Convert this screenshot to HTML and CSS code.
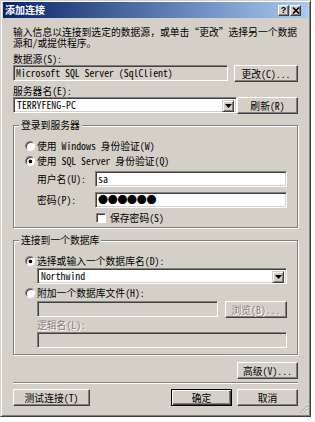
FILE: index.html
```html
<!DOCTYPE html>
<html lang="zh-CN">
<head>
  <meta charset="UTF-8" />
  <title>添加连接</title>
  <link rel="stylesheet" href="styles.css">
</head>
<body>
  <div class="dialog">
    <div class="titlebar">
      <span class="title">添加连接</span>
      <div class="caption-btns">
        <span class="cap-btn">?</span>
        <span class="cap-btn">
          <svg viewBox="0 0 8 7" width="8" height="7">
            <path d="M1 0.5l6 6M7 0.5l-6 6" stroke="#000" stroke-width="1.6" fill="none"/>
          </svg>
        </span>
      </div>
    </div>

    <div class="content">
      <p class="intro">输入信息以连接到选定的数据源，或单击“更改”选择另一个数据<br>源和/或提供程序。</p>

      <div class="label first">数据源(S):</div>
      <div class="row">
        <input class="field readonly" value="Microsoft SQL Server (SqlClient)" readonly>
        <button class="btn btn-change">更改(C)...</button>
      </div>

      <div class="label">服务器名(E):</div>
      <div class="row">
        <div class="combo">
          <span class="combo-text">TERRYFENG-PC</span>
          <span class="combo-arrow"><svg viewBox="0 0 7 4" width="7" height="4"><path d="M0 0h7L3.5 4z" fill="#000"/></svg></span>
        </div>
        <button class="btn btn-side">刷新(R)</button>
      </div>

      <div class="group group-login">
        <span class="group-title">登录到服务器</span>
        <label class="radio-row first">
          <input type="radio" name="auth" class="radio">使用 Windows 身份验证(W)
        </label>
        <label class="radio-row">
          <input type="radio" name="auth" class="radio" checked>使用 SQL Server 身份验证(Q)
        </label>
        <div class="field-row user">
          <span class="field-label">用户名(U):</span>
          <input class="field" value="sa">
        </div>
        <div class="field-row pwd">
          <span class="field-label">密码(P):</span>
          <div class="field dots">●●●●●●</div>
        </div>
        <label class="check-row">
          <input type="checkbox" class="check">保存密码(S)
        </label>
      </div>

      <div class="group group-db">
        <span class="group-title">连接到一个数据库</span>
        <label class="radio-row first">
          <input type="radio" name="db" class="radio" checked>选择或输入一个数据库名(D):
        </label>
        <div class="indent">
          <div class="combo">
            <span class="combo-text">Northwind</span>
            <span class="combo-arrow"><svg viewBox="0 0 7 4" width="7" height="4"><path d="M0 0h7L3.5 4z" fill="#000"/></svg></span>
          </div>
        </div>
        <label class="radio-row attach">
          <input type="radio" name="db" class="radio">附加一个数据库文件(H):
        </label>
        <div class="indent file-row">
          <div class="field disabled"></div>
          <button class="btn btn-browse" disabled>浏览(B)...</button>
        </div>
        <div class="indent sub-label disabled-text">逻辑名(L):</div>
        <div class="indent logic-row">
          <div class="field disabled"></div>
        </div>
      </div>

      <div class="adv-row">
        <button class="btn btn-side">高级(V)...</button>
      </div>

      <div class="separator"></div>

      <div class="footer">
        <button class="btn btn-test">测试连接(T)</button>
        <button class="btn btn-side btn-default">确定</button>
        <button class="btn btn-side">取消</button>
      </div>
    </div>

    <svg class="grip" viewBox="0 0 8 8" width="8" height="8">
      <path d="M7.5 1L1 7.5M7.5 4L4 7.5" stroke="#808080" stroke-width="1" fill="none"/>
      <path d="M7.5 2L2 7.5M7.5 5L5 7.5" stroke="#fff" stroke-width="1" fill="none"/>
    </svg>
  </div>
</body>
</html>
```

FILE: styles.css
```css
* {
  margin: 0;
  padding: 0;
  box-sizing: border-box;
}
body {
  background: #fff;
  font-family: "Noto Sans Mono CJK SC", "Noto Sans CJK SC", "DejaVu Sans Mono", monospace;
  font-size: 9.8px;
  line-height: 10px;
  color: #000;
}
.dialog {
  position: relative;
  width: 311px;
  height: 417px;
  background: #d4d0c8;
  border: 1px solid;
  border-color: #d4d0c8 #404040 #404040 #d4d0c8;
  box-shadow: inset 1px 1px 0 #fff, inset -1px -1px 0 #808080;
  padding: 1px 2px 2px;
}

/* title bar */
.titlebar {
  height: 16px;
  display: flex;
  align-items: center;
  justify-content: space-between;
  padding: 0 7px 0 2px;
  background: linear-gradient(to right, #0a246a, #a6caf0);
}
.title {
  color: #fff;
  font-weight: bold;
  font-size: 10px;
  font-family: "Noto Sans CJK SC", sans-serif;
}
.caption-btns {
  display: flex;
  gap: 1px;
}
.cap-btn {
  width: 11px;
  height: 11px;
  display: flex;
  align-items: center;
  justify-content: center;
  background: #d4d0c8;
  border: 1px solid;
  border-color: #fff #404040 #404040 #fff;
  box-shadow: inset -1px -1px 0 #808080;
  font: bold 9px "Liberation Sans", sans-serif;
  line-height: 9px;
}

.content {
  padding: 0 10px;
}
.intro {
  margin-top: 9px;
  line-height: 11px;
}
.label {
  margin-top: 4px;
  height: 10px;
}
.label.first {
  margin-top: 5px;
}
.row {
  display: flex;
  align-items: flex-start;
  margin-top: 1px;
  height: 17px;
}

/* sunken fields */
.field {
  height: 16px;
  background: #fff;
  border: 1px solid;
  border-color: #808080 #fff #fff #808080;
  box-shadow: inset 1px 1px 0 #404040, inset -1px -1px 0 #d4d0c8;
  padding: 0 0 0 2px;
  font: inherit;
  line-height: 14px;
  color: #000;
  outline: none;
  min-width: 0;
}
input.field {
  flex: 1;
}
.field.readonly,
.field.disabled {
  background: #d4d0c8;
}
.row .field {
  width: 215px;
  flex: none;
}

.combo {
  flex: 1;
  height: 16px;
  display: flex;
  background: #fff;
  border: 1px solid;
  border-color: #808080 #fff #fff #808080;
  box-shadow: inset 1px 1px 0 #404040, inset -1px -1px 0 #d4d0c8;
  padding: 2px;
}
.combo-text {
  flex: 1;
  line-height: 11px;
  padding-left: 1px;
}
.combo-arrow {
  width: 12px;
  height: 12px;
  display: flex;
  align-items: center;
  justify-content: center;
  background: #d4d0c8;
  border: 1px solid;
  border-color: #d4d0c8 #404040 #404040 #d4d0c8;
  box-shadow: inset 1px 1px 0 #fff, inset -1px -1px 0 #808080;
}

/* buttons */
.btn {
  height: 17px;
  background: #d4d0c8;
  border: 1px solid;
  border-color: #fff #404040 #404040 #fff;
  box-shadow: inset -1px -1px 0 #808080;
  font: inherit;
  color: #000;
  text-align: center;
}
.btn-change {
  width: 64px;
  margin-left: auto;
}
.btn-side {
  width: 61px;
  margin-left: 5px;
}
.row .btn-side {
  margin-left: auto;
}
.btn-default {
  border-color: #000;
  box-shadow: inset 1px 1px 0 #fff, inset -1px -1px 0 #404040, inset -2px -2px 0 #808080;
}
.btn:disabled,
.disabled-text {
  color: #808080;
  text-shadow: 1px 1px 0 #fff;
}

/* group boxes */
.group {
  position: relative;
  border: 1px solid #808080;
  box-shadow: 1px 1px 0 #fff, inset 1px 1px 0 #fff;
}
.group-login {
  margin-top: 11px;
  padding: 0 10px 3px 11px;
}
.group-db {
  margin-top: 12px;
  padding: 0 10px 6px 11px;
}
.group-title {
  position: absolute;
  top: -6px;
  left: 5px;
  padding: 0 2px;
  background: #d4d0c8;
}
.radio-row {
  display: flex;
  align-items: center;
  height: 12px;
  margin-top: 3px;
}
.radio-row.first {
  margin-top: 14px;
}
.radio {
  appearance: none;
  width: 10px;
  height: 10px;
  margin: 0 2px 0 0;
  border-radius: 50%;
  border: 1px solid;
  border-color: #808080 #fff #fff #808080;
  background: #fff;
  box-shadow: inset 1px 1px 0 #404040;
}
.radio:checked {
  background: radial-gradient(circle at 55% 55%, #000 0 1.6px, #fff 2.2px);
}

.field-row {
  display: flex;
  align-items: center;
  padding-left: 12px;
}
.field-row.user {
  margin-top: 4px;
}
.field-row.pwd {
  margin-top: 5px;
}
.field-label {
  width: 58px;
}
.dots {
  flex: 1;
  font-size: 10px;
  letter-spacing: -0.3px;
}
.check-row {
  display: flex;
  align-items: center;
  height: 12px;
  margin-top: 4px;
  padding-left: 71px;
}
.check {
  appearance: none;
  width: 10px;
  height: 10px;
  margin: 0 4px 0 0;
  background: #fff;
  border: 1px solid;
  border-color: #808080 #fff #fff #808080;
  box-shadow: inset 1px 1px 0 #404040;
}

.indent {
  padding-left: 12px;
}
.indent .combo {
  margin-top: 1px;
}
.radio-row.attach {
  margin-top: 3px;
}
.file-row {
  display: flex;
  margin-top: 2px;
  height: 17px;
}
.file-row .field {
  flex: 1;
}
.btn-browse {
  width: 62px;
  margin-left: 7px;
}
.sub-label {
  margin-top: 2px;
  height: 10px;
}
.logic-row {
  display: flex;
  margin-top: 2px;
}
.logic-row .field {
  flex: 1;
}

.adv-row {
  display: flex;
  justify-content: flex-end;
  margin-top: 7px;
}
.separator {
  margin-top: 3px;
  border-top: 1px solid #808080;
  border-bottom: 1px solid #fff;
}
.footer {
  display: flex;
  margin-top: 5px;
}
.btn-test {
  width: 77px;
  margin-right: auto;
}

.grip {
  position: absolute;
  right: 2px;
  bottom: 3px;
}
```
